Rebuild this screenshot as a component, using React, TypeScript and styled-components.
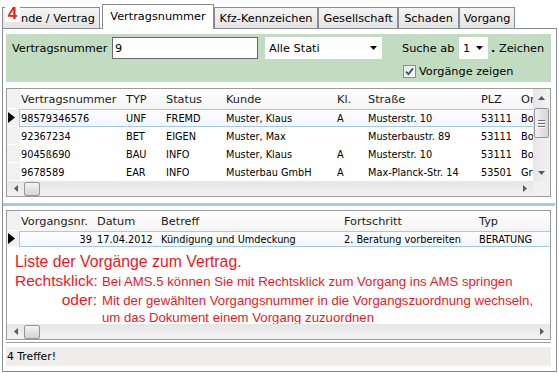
import React from "react";
import styled, { createGlobalStyle } from "styled-components";

const GlobalStyle = createGlobalStyle`
  html, body {
    margin: 0;
    padding: 0;
    background: #fff;
  }
  body {
    width: 559px;
    height: 373px;
    overflow: hidden;
    font-family: "DejaVu Sans", Tahoma, sans-serif;
    color: #000;
  }
`;

const Window = styled.div`
  width: 559px;
  height: 373px;
  box-sizing: border-box;
  padding: 4px 0 0 2px;
`;

const TabStrip = styled.div`
  position: relative;
  display: flex;
  align-items: flex-end;
  height: 24px;
  z-index: 1;
`;

const Tab = styled.div<{ $active?: boolean; $w: number; $gap?: number; $inset?: number }>`
  width: ${(p) => p.$w}px;
  margin-left: ${(p) => p.$gap ?? 0}px;
  height: ${(p) => (p.$active ? 25 : 21)}px;
  margin-bottom: ${(p) => (p.$active ? -1 : 0)}px;
  box-sizing: border-box;
  border: 1px solid #898c95;
  border-bottom: none;
  background: ${(p) =>
    p.$active ? "#fff" : "linear-gradient(to bottom, #f4f4f4, #e4e4e4)"};
  display: flex;
  align-items: center;
  justify-content: ${(p) => (p.$inset ? "flex-start" : "center")};
  padding-left: ${(p) => p.$inset ?? 0}px;
  padding-bottom: ${(p) => (p.$active ? 2 : 0)}px;
  font-size: 11.3px;
  white-space: nowrap;
  overflow: hidden;
`;

const Badge = styled.div`
  position: absolute;
  left: 3px;
  top: 1px;
  width: 15px;
  height: 17px;
  background: #fff;
  color: #f21c1c;
  font-family: "Liberation Sans", Arial, sans-serif;
  font-weight: bold;
  font-size: 17px;
  line-height: 17px;
  text-align: center;
`;

const TabPanel = styled.div`
  width: 555px;
  height: 344px;
  box-sizing: border-box;
  border: 1px solid #898c95;
  padding: 5px 5px 0 3px;
  display: flex;
  flex-direction: column;
`;

const FilterPanel = styled.div`
  height: 48px;
  flex: none;
  box-sizing: border-box;
  background: #c1dcc1;
  display: flex;
  padding: 3px 0 0 6px;
  font-size: 11.3px;
`;

const FieldRow = styled.div`
  display: flex;
  align-items: center;
  height: 22px;
`;

const FieldLabel = styled.span<{ $w?: number; $gap?: number }>`
  width: ${(p) => (p.$w ? `${p.$w}px` : "auto")};
  margin-left: ${(p) => p.$gap ?? 0}px;
  white-space: nowrap;
`;

const TextBox = styled.div`
  width: 146px;
  height: 22px;
  box-sizing: border-box;
  border: 1px solid #6a6a6a;
  background: #fff;
  padding-left: 2px;
  display: flex;
  align-items: center;
`;

const Combo = styled.div<{ $w: number; $gap?: number }>`
  width: ${(p) => p.$w}px;
  margin-left: ${(p) => p.$gap ?? 0}px;
  height: 22px;
  box-sizing: border-box;
  background: #fff;
  display: flex;
  align-items: center;
  justify-content: space-between;
  padding: 0 5px 0 4px;
`;

const RightGroup = styled.div`
  margin-left: 20px;
  display: flex;
  flex-direction: column;
`;

const CheckRow = styled.div`
  display: flex;
  align-items: center;
  margin-top: 6px;
  margin-left: 1px;
  gap: 3px;
`;

const CheckBox = styled.div`
  width: 13px;
  height: 13px;
  box-sizing: border-box;
  border: 1px solid #8e8f8f;
  background: linear-gradient(to bottom right, #e6e6e6, #fbfbfb);
  display: flex;
  align-items: center;
  justify-content: center;
`;

const SplitArea = styled.div`
  display: flex;
  flex-direction: column;
  border-bottom: 1px solid #a0a0a0;
  padding-bottom: 2px;
`;

const Grid = styled.div<{ $h: number; $top: number }>`
  height: ${(p) => p.$h}px;
  margin-top: ${(p) => p.$top}px;
  box-sizing: border-box;
  border: 1px solid #9c9c9c;
  background: #fff;
  display: grid;
  grid-template-columns: 1fr 17px;
  grid-template-rows: 1fr 15px;
  overflow: hidden;
`;

const GridBody = styled.div<{ $span?: boolean }>`
  grid-column: ${(p) => (p.$span ? "1 / 3" : "1 / 2")};
  overflow: hidden;
  min-width: 0;
`;

const Row = styled.div<{ $h: number; $header?: boolean }>`
  display: flex;
  height: ${(p) => p.$h}px;
  font-size: ${(p) => (p.$header ? 11.3 : 9.75)}px;
  background: ${(p) =>
    p.$header ? "linear-gradient(to bottom, #ffffff, #f4f4f4)" : "transparent"};
  color: ${(p) => (p.$header ? "#1a1a1a" : "#000")};
`;

const RowHead = styled.div`
  width: 13px;
  flex: none;
  box-sizing: border-box;
  background: #f1f1f1;
  border-bottom: 1px solid #fff;
  display: flex;
  align-items: center;
  padding-left: 1px;
`;

const Cells = styled.div<{ $cols: string; $selected?: boolean }>`
  flex: 1;
  min-width: 0;
  display: grid;
  grid-template-columns: ${(p) => p.$cols};
  align-items: center;
  box-sizing: border-box;
  border: 1px solid ${(p) => (p.$selected ? "#a6c8ee" : "transparent")};
  border-right: none;
  margin-left: -1px;
  overflow: hidden;
  background: ${(p) =>
    p.$selected ? "linear-gradient(to bottom, #fdfeff, #f1f7fe)" : "transparent"};
`;

const Cell = styled.div<{ $right?: boolean }>`
  white-space: nowrap;
  overflow: hidden;
  padding: ${(p) => (p.$right ? "0 4px 0 0" : "0 0 0 1px")};
  text-align: ${(p) => (p.$right ? "right" : "left")};
`;

const VScroll = styled.div`
  grid-column: 2;
  grid-row: 1;
  background: linear-gradient(to right, #e6e6e6, #f2f2f2);
  display: flex;
  flex-direction: column;
  align-items: center;
`;

const HScroll = styled.div<{ $span?: boolean }>`
  grid-column: ${(p) => (p.$span ? "1 / 3" : "1 / 2")};
  grid-row: 2;
  background: linear-gradient(to bottom, #e6e6e6, #f2f2f2);
  display: flex;
  align-items: center;
`;

const ArrowBtn = styled.div<{ $vertical?: boolean }>`
  width: 17px;
  height: ${(p) => (p.$vertical ? "17px" : "15px")};
  flex: none;
  display: flex;
  align-items: center;
  justify-content: center;
`;

const HThumb = styled.div`
  width: 16px;
  height: 14px;
  box-sizing: border-box;
  border: 1px solid #969696;
  border-radius: 2px;
  background: linear-gradient(to bottom, #f4f4f4, #e3e3e3 50%, #d6d6d6);
`;

const VThumb = styled.div`
  width: 15px;
  height: 30px;
  margin-top: 2px;
  box-sizing: border-box;
  border: 1px solid #969696;
  border-radius: 2px;
  background: linear-gradient(to right, #f4f4f4, #e3e3e3 50%, #d6d6d6);
  display: flex;
  flex-direction: column;
  align-items: center;
  justify-content: center;
  gap: 2px;
`;

const Grip = styled.div`
  width: 7px;
  height: 1px;
  background: #6f6f6f;
  box-shadow: 0 1px 0 #fff;
`;

const Track = styled.div`
  flex: 1;
`;

const Corner = styled.div`
  grid-column: 2;
  grid-row: 2;
  background: #f0f0f0;
`;

const Splitter = styled.div`
  height: 3px;
  margin: 6px -4px 4px -3px;
  background: #a6c8ea;
`;

const Annotation = styled.div`
  display: grid;
  grid-template-columns: 82px auto;
  column-gap: 5px;
  align-items: baseline;
  margin-top: 5px;
  padding-left: 8px;
  color: #f5141e;
  font-family: "Liberation Sans", Arial, sans-serif;
  white-space: nowrap;
`;

const AnnoTitle = styled.div`
  grid-column: 1 / 3;
  font-size: 15.8px;
  line-height: 19px;
`;

const AnnoLabel = styled.div<{ $lh: number }>`
  text-align: right;
  font-size: 15.5px;
  line-height: ${(p) => p.$lh}px;
`;

const AnnoText = styled.div<{ $lh: number }>`
  font-size: 13.2px;
  line-height: ${(p) => p.$lh}px;
`;

const StatusBar = styled.div`
  margin-top: 4px;
  height: 19px;
  background: #efecec;
  display: flex;
  align-items: center;
  padding-left: 1px;
  font-size: 10.8px;
`;

const Tri = ({ dir }: { dir: "up" | "down" | "left" | "right" }) => {
  const shapes = {
    up: { w: 7, h: 4, d: "M0 4 L3.5 0 L7 4 Z" },
    down: { w: 7, h: 4, d: "M0 0 L7 0 L3.5 4 Z" },
    left: { w: 4, h: 7, d: "M4 0 L4 7 L0 3.5 Z" },
    right: { w: 4, h: 7, d: "M0 0 L4 3.5 L0 7 Z" },
  }[dir];
  return (
    <svg width={shapes.w} height={shapes.h} viewBox={`0 0 ${shapes.w} ${shapes.h}`}>
      <path d={shapes.d} fill="#5a5a5a" />
    </svg>
  );
};

const ComboArrow = () => (
  <svg width="7" height="4" viewBox="0 0 7 4">
    <path d="M0 0 L7 0 L3.5 4 Z" fill="#000" />
  </svg>
);

const RowMarker = () => (
  <svg width="7" height="11" viewBox="0 0 7 11">
    <path d="M0 0 L7 5.5 L0 11 Z" fill="#000" />
  </svg>
);

const HScrollBar = ({ span }: { span?: boolean }) => (
  <HScroll $span={span}>
    <ArrowBtn>
      <Tri dir="left" />
    </ArrowBtn>
    <HThumb />
    <Track />
    <ArrowBtn>
      <Tri dir="right" />
    </ArrowBtn>
  </HScroll>
);

const contractCols = "105px 40px 60px 111px 31px 113px 40px 60px";
const contractHeads = ["Vertragsnummer", "TYP", "Status", "Kunde", "Kl.", "Straße", "PLZ", "Ort"];
const contracts = [
  ["98579346576", "UNF", "FREMD", "Muster, Klaus", "A", "Musterstr. 10", "53111", "Bonn"],
  ["92367234", "BET", "EIGEN", "Muster, Max", "", "Musterbaustr. 89", "53111", "Bonn"],
  ["9045ß690", "BAU", "INFO", "Muster, Klaus", "A", "Musterstr. 10", "53111", "Bonn"],
  ["9678589", "EAR", "INFO", "Musterbau GmbH", "A", "Max-Planck-Str. 14", "53501", "Grafschaft"],
];

const caseCols = "76px 64px 183px 135px 72px";
const caseHeads = ["Vorgangsnr.", "Datum", "Betreff", "Fortschritt", "Typ"];
const cases = [["39", "17.04.2012", "Kündigung und Umdeckung", "2. Beratung vorbereiten", "BERATUNG"]];

// the first tab is scrolled partly out of view; the badge sits where "Ku" would be
const tabs = [
  { label: "nde / Vertrag", w: 98, inset: 18 },
  { label: "Vertragsnummer", w: 112, active: true, gap: 2 },
  { label: "Kfz-Kennzeichen", w: 104 },
  { label: "Gesellschaft", w: 80 },
  { label: "Schaden", w: 61 },
  { label: "Vorgang", w: 56 },
];

export default function App() {
  return (
    <Window>
      <GlobalStyle />
      <TabStrip>
        {tabs.map((t) => (
          <Tab key={t.label} $w={t.w} $active={t.active} $gap={t.gap} $inset={t.inset}>
            {t.label}
          </Tab>
        ))}
        <Badge>4</Badge>
      </TabStrip>

      <TabPanel>
        <FilterPanel>
          <FieldRow>
            <FieldLabel $w={100}>Vertragsnummer</FieldLabel>
            <TextBox>9</TextBox>
            <Combo $w={117} $gap={7}>
              <span>Alle Stati</span>
              <ComboArrow />
            </Combo>
          </FieldRow>
          <RightGroup>
            <FieldRow>
              <FieldLabel $w={57}>Suche ab</FieldLabel>
              <Combo $w={29}>
                <span>1</span>
                <ComboArrow />
              </Combo>
              <FieldLabel $gap={3}>
                <b>.</b> Zeichen
              </FieldLabel>
            </FieldRow>
            <CheckRow>
              <CheckBox>
                <svg width="9" height="9" viewBox="0 0 9 9">
                  <path d="M1 4.6 L3.4 7.2 L8 1.4" fill="none" stroke="#2f4a8a" strokeWidth="1.7" />
                </svg>
              </CheckBox>
              <span>Vorgänge zeigen</span>
            </CheckRow>
          </RightGroup>
        </FilterPanel>

        <SplitArea>
          <Grid $h={109} $top={6}>
            <GridBody>
              <Row $h={20} $header>
                <RowHead />
                <Cells $cols={contractCols}>
                  {contractHeads.map((h) => (
                    <Cell key={h}>{h}</Cell>
                  ))}
                </Cells>
              </Row>
              {contracts.map((r, i) => (
                <Row key={r[0]} $h={18}>
                  <RowHead>{i === 0 && <RowMarker />}</RowHead>
                  <Cells $cols={contractCols} $selected={i === 0}>
                    {r.map((v, j) => (
                      <Cell key={j}>{v}</Cell>
                    ))}
                  </Cells>
                </Row>
              ))}
            </GridBody>
            <VScroll>
              <ArrowBtn $vertical>
                <Tri dir="up" />
              </ArrowBtn>
              <VThumb>
                <Grip />
                <Grip />
                <Grip />
              </VThumb>
              <Track />
              <ArrowBtn $vertical>
                <Tri dir="down" />
              </ArrowBtn>
            </VScroll>
            <HScrollBar />
            <Corner />
          </Grid>

          <Splitter />

          <Grid $h={130} $top={0}>
            <GridBody $span>
              <Row $h={20} $header>
                <RowHead />
                <Cells $cols={caseCols}>
                  {caseHeads.map((h) => (
                    <Cell key={h}>{h}</Cell>
                  ))}
                </Cells>
              </Row>
              {cases.map((r) => (
                <Row key={r[0]} $h={16}>
                  <RowHead>
                    <RowMarker />
                  </RowHead>
                  <Cells $cols={caseCols} $selected>
                    {r.map((v, j) => (
                      <Cell key={j} $right={j === 0}>
                        {v}
                      </Cell>
                    ))}
                  </Cells>
                </Row>
              ))}
              <Annotation>
                <AnnoTitle>Liste der Vorgänge zum Vertrag.</AnnoTitle>
                <AnnoLabel $lh={19}>Rechtsklick:</AnnoLabel>
                <AnnoText $lh={19}>
                  Bei AMS.5 können Sie mit Rechtsklick zum Vorgang ins AMS springen
                </AnnoText>
                <AnnoLabel $lh={17}>oder:</AnnoLabel>
                <AnnoText $lh={17}>
                  Mit der gewählten Vorgangsnummer in die Vorgangszuordnung wechseln,
                  <br />
                  um das Dokument einem Vorgang zuzuordnen
                </AnnoText>
              </Annotation>
            </GridBody>
            <HScrollBar span />
          </Grid>
        </SplitArea>

        <StatusBar>4 Treffer!</StatusBar>
      </TabPanel>
    </Window>
  );
}
